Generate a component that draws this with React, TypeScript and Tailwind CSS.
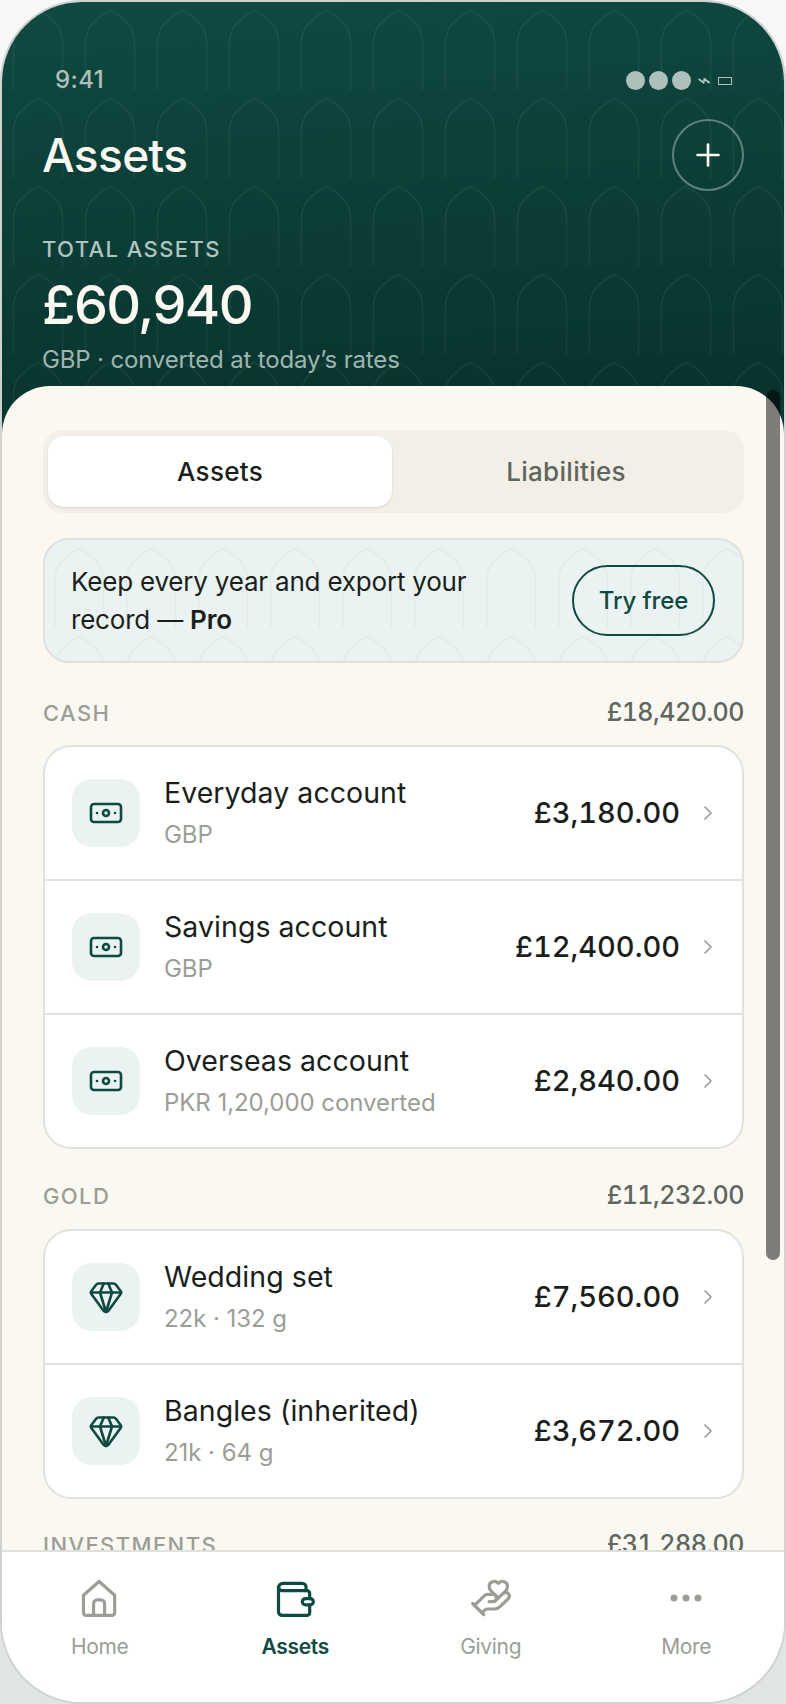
import { Banknote, ChevronRight, Gem, HandHeart, Plus } from "lucide-react";

const moneyRows = [
  { name: "Everyday account", sub: "GBP", amount: "£3,180.00" },
  { name: "Savings account", sub: "GBP", amount: "£12,400.00" },
  { name: "Overseas account", sub: "PKR 1,20,000 converted", amount: "£2,840.00" },
];

const goldRows = [
  { name: "Wedding set", sub: "22k · 132 g", amount: "£7,560.00" },
  { name: "Bangles (inherited)", sub: "21k · 64 g", amount: "£3,672.00" },
];

// the arch tile used behind the header and the promo card
function ArchPattern({ id, stroke, x = 0, y = 0 }: { id: string; stroke: string; x?: number; y?: number }) {
  return (
    <svg className="absolute inset-0 w-full h-full pointer-events-none" aria-hidden="true">
      <defs>
        <pattern id={id} x={x} y={y} width="72" height="88" patternUnits="userSpaceOnUse">
          <path
            d="M11.5 88V40C11.5 23 27 13 36 8.5 45 13 60.5 23 60.5 40V88"
            fill="none"
            stroke={stroke}
            strokeWidth="1.5"
          />
        </pattern>
      </defs>
      <rect width="100%" height="100%" fill={`url(#${id})`} />
    </svg>
  );
}

function SectionHead({ label, total }: { label: string; total: string }) {
  return (
    <div className="flex items-center justify-between h-8">
      <span className="text-[22px] font-medium tracking-[1.4px] text-[#9a9e96]">{label}</span>
      <span className="text-[25px] font-medium tabular-nums tracking-[-0.5px] text-[#5e665e]">{total}</span>
    </div>
  );
}

function AssetRow({ name, sub, amount, icon }: { name: string; sub: string; amount: string; icon: React.ReactNode }) {
  return (
    <div className="flex items-center h-[132px] pl-[27px] pr-[22px] border-b-2 border-[#e0e3dd] last:border-b-0 box-content">
      <div className="w-[68px] h-[68px] rounded-[20px] bg-[#eaf3f1] flex items-center justify-center text-[#0f4a42]">
        {icon}
      </div>
      <div className="ml-[24px] flex-1 min-w-0">
        <div className="text-[28.5px] leading-[36px] tracking-[0.05px] text-[#1a1f1c]">{name}</div>
        <div className="text-[24px] leading-[32px] mt-[8px] tracking-[-0.05px] text-[#9a9e96]">{sub}</div>
      </div>
      <span className="text-[29px] font-medium tabular-nums tracking-[0px] text-[#1a1f1c]">{amount}</span>
      <ChevronRight size={24} strokeWidth={1.75} className="ml-[16px] text-[#9a9e96]" />
    </div>
  );
}

function NavItem({ label, active, children }: { label: string; active?: boolean; children: React.ReactNode }) {
  return (
    <div className={`flex-1 flex flex-col items-center ${active ? "text-[#0f4a42]" : "text-[#9a9e96]"}`}>
      <div className="w-11 h-11">{children}</div>
      <span className={`mt-[13px] text-[21px] leading-[28px] tracking-[-0.3px] ${active ? "font-semibold" : ""}`}>{label}</span>
    </div>
  );
}

export default function App() {
  return (
    <div className="w-[786px] h-[1704px] bg-[linear-gradient(180deg,#f7f8f7,#e0e4e3)] [font-family:Inter,sans-serif]">
      <div className="relative w-full h-full border-2 border-[#cfd2ce] rounded-[82px] overflow-hidden flex flex-col bg-white">
        {/* green header */}
        <header className="relative h-[438px] shrink-0 bg-[linear-gradient(175deg,#0f4a42,#07302b)] text-[#fbf8f2]">
          <ArchPattern id="hero-arches" stroke="rgba(255,255,255,0.055)" />
          <div className="relative pl-[40px] pr-[40px]">
            <div className="flex items-center justify-between h-[40px] mt-[58px] pl-[13px] pr-[12px] text-[#adc0bb]">
              <span className="text-[24px] font-medium tracking-[0.4px]">9:41</span>
              <div className="flex items-center">
                <div className="flex gap-1">
                  <span className="w-[19px] h-[19px] rounded-full bg-[#adc0bb]" />
                  <span className="w-[19px] h-[19px] rounded-full bg-[#adc0bb]" />
                  <span className="w-[19px] h-[19px] rounded-full bg-[#adc0bb]" />
                </div>
                <svg width="12" height="6" viewBox="0 0 12 6" className="ml-[7px] translate-y-px" fill="none" stroke="currentColor" strokeWidth="2">
                  <path d="M0.5 1 5.5 4.5 6.5 1 11.5 5" />
                </svg>
                <span className="ml-[8px] w-[14px] h-[8px] border-[1.5px] border-[#adc0bb] translate-y-px" />
              </div>
            </div>
            <div className="flex items-start justify-between mt-[19px]">
              <h1 className="text-[46px] leading-[72px] font-medium tracking-[-0.6px]">Assets</h1>
              <button className="w-[72px] h-[72px] rounded-full border-2 border-white/35 flex items-center justify-center">
                <Plus size={36} strokeWidth={1.75} />
              </button>
            </div>
            <div className="mt-[42px] text-[22px] leading-[32px] font-medium tracking-[1.4px] text-[#afc4be]">TOTAL ASSETS</div>
            <div className="mt-[8px] text-[54px] leading-[64px] font-medium tracking-[-1.6px]">£60,940</div>
            <div className="mt-[7px] text-[24px] leading-[32px] tracking-[-0.16px] text-[#a0b5af]">GBP · converted at today’s rates</div>
          </div>
        </header>

        {/* cream sheet */}
        <main className="relative -mt-[54px] flex-1 min-h-0 overflow-hidden rounded-t-[48px] bg-[#fbf8f2] pl-[41px] pr-[40px] pt-[44px]">
          <div className="flex h-[83px] rounded-[20px] bg-[#f3efe6] p-[6px] pl-[5px]">
            <div className="w-[344px] rounded-[16px] bg-white shadow-sm flex items-center justify-center text-[26px] font-medium tracking-[0.3px] text-[#1a1f1c]">
              Assets
            </div>
            <div className="flex-1 flex items-center justify-center pl-[2px] text-[26px] font-medium tracking-[0.3px] text-[#5e665e]">
              Liabilities
            </div>
          </div>

          <div className="relative mt-[25px] h-[125px] rounded-[26px] border-2 border-[#dfe2dc] bg-[#eaf3f1] overflow-hidden flex items-center justify-between pl-[26px] pr-[27px]">
            <ArchPattern id="promo-arches" stroke="rgba(15,74,66,0.045)" x={-2} />
            <p className="relative text-[26px] leading-[38px] tracking-[-0.2px] text-[#1a1f1c]">
              Keep every year and export your
              <br />
              record — <b className="font-semibold">Pro</b>
            </p>
            <button className="relative w-[143px] h-[71px] rounded-full border-2 border-[#0f4a42] text-[24px] font-medium tracking-[-0.1px] text-[#0f4a42]">
              Try free
            </button>
          </div>

          <div className="mt-[34px]">
            <SectionHead label="CASH" total="£18,420.00" />
            <div className="mt-[16px] rounded-[28px] border-2 border-[#e0e3dd] bg-white overflow-hidden">
              {moneyRows.map((r) => (
                <AssetRow key={r.name} {...r} icon={<Banknote size={36} strokeWidth={1.75} />} />
              ))}
            </div>
          </div>

          <div className="mt-[31px]">
            <SectionHead label="GOLD" total="£11,232.00" />
            <div className="mt-[17px] rounded-[28px] border-2 border-[#e0e3dd] bg-white overflow-hidden">
              {goldRows.map((r) => (
                <AssetRow key={r.name} {...r} icon={<Gem size={36} strokeWidth={1.75} />} />
              ))}
            </div>
          </div>

          <div className="mt-[30px]">
            <SectionHead label="INVESTMENTS" total="£31,288.00" />
          </div>
        </main>

        {/* scrollbar thumb */}
        <div className="absolute right-[4px] top-[388px] w-[14px] h-[870px] rounded-full bg-black/50" />

        {/* tab bar */}
        <nav className="relative shrink-0 h-[152px] border-t-2 border-[#dfe2dc] bg-white flex pt-[24px]">
          <NavItem label="Home">
            <svg viewBox="0 0 24 24" fill="none" stroke="currentColor" strokeWidth="1.75" strokeLinejoin="round" strokeLinecap="round">
              <path d="M3 10.5 11.5 3l8.5 7.5V20a1.5 1.5 0 0 1-1.5 1.5h-14A1.5 1.5 0 0 1 3 20z" />
              <path d="M8.5 21.5V15a2 2 0 0 1 2-2h2a2 2 0 0 1 2 2v6.5" />
            </svg>
          </NavItem>
          <NavItem label="Assets" active>
            <svg viewBox="0 0 24 24" fill="none" stroke="currentColor" strokeWidth="1.75" strokeLinejoin="round" strokeLinecap="round">
              <path d="M3 6.5A2.5 2.5 0 0 1 5.5 4H16a2 2 0 0 1 2 2v2" />
              <path d="M3 6a2 2 0 0 0 2 2h13.5A1.5 1.5 0 0 1 20 9.5v2.8" />
              <path d="M20 15.7V20a1.5 1.5 0 0 1-1.5 1.5H5a2 2 0 0 1-2-2V6" />
              <rect x="16" y="12.3" width="6" height="3.4" rx="1.7" />
            </svg>
          </NavItem>
          <NavItem label="Giving">
            <HandHeart size={44} strokeWidth={1.75} />
          </NavItem>
          <NavItem label="More">
            <svg viewBox="0 0 44 44" fill="currentColor">
              <circle cx="10" cy="22" r="3.5" />
              <circle cx="22" cy="22" r="3.5" />
              <circle cx="34" cy="22" r="3.5" />
            </svg>
          </NavItem>
        </nav>
      </div>
    </div>
  );
}
